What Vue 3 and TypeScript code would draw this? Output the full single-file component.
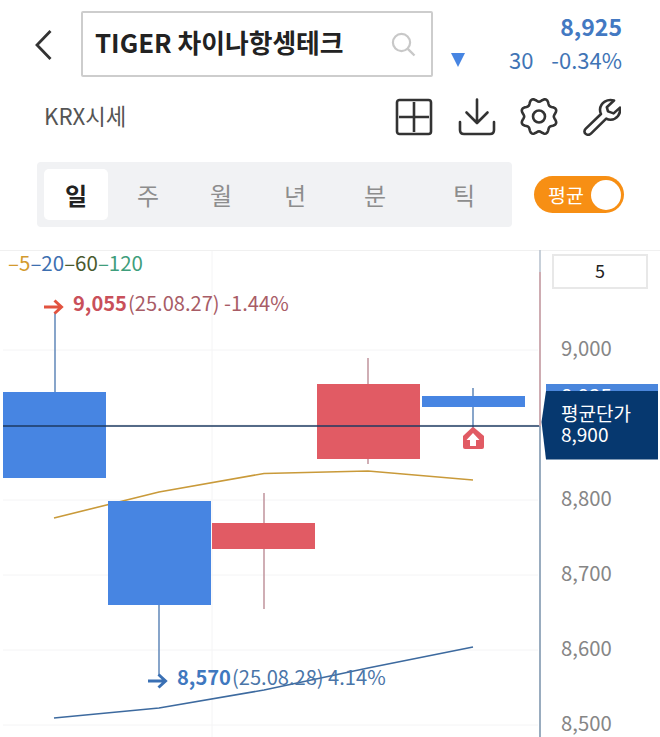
<script setup lang="ts">
type Candle = { x: number; y: number; w: number; h: number; wx: number; wy1: number; wy2: number; up: boolean }

const tabs = ['일', '주', '월', '년', '분', '틱']
const tabCenters = [76, 148, 221, 295, 375, 464]

const legend = [
  { label: '5', color: '#d39a2e' },
  { label: '20', color: '#3d6fb0' },
  { label: '60', color: '#4a5a2e' },
  { label: '120', color: '#3f9e7c' }
]

const gridY = [350, 425, 500, 575, 650, 725]
const axisLabels = [
  { y: 349, text: '9,000' },
  { y: 499, text: '8,800' },
  { y: 574, text: '8,700' },
  { y: 649, text: '8,600' },
  { y: 724, text: '8,500' }
]

const candles: Candle[] = [
  { x: 3, y: 392, w: 103, h: 86, wx: 55, wy1: 312, wy2: 392, up: false },
  { x: 108, y: 501, w: 103, h: 104, wx: 159, wy1: 605, wy2: 675, up: false },
  { x: 212, y: 523, w: 103, h: 26, wx: 264, wy1: 493, wy2: 609, up: true },
  { x: 317, y: 384, w: 103, h: 75, wx: 368, wy1: 358, wy2: 464, up: true },
  { x: 422, y: 396, w: 103, h: 11, wx: 473, wy1: 388, wy2: 428, up: false }
]

const ma5 = '54,518 159,492 264,473.5 368,471 473,480'
const ma20 = '54,718 159,708 264,690 368,668 473,647'

// 톱니바퀴 외곽선
function gearPath(cx: number, cy: number): string {
  const pts: string[] = []
  for (let i = 0; i < 96; i++) {
    const t = (i / 96) * Math.PI * 2
    const r = 16.6 + 1.8 * Math.cos(8 * t + Math.PI)
    pts.push(`${(cx + r * Math.cos(t)).toFixed(2)} ${(cy + r * Math.sin(t)).toFixed(2)}`)
  }
  return 'M' + pts.join('L') + 'Z'
}
const gear = gearPath(19, 18.5)
</script>

<template>
  <div class="page">
    <header class="top">
      <svg class="back" width="18" height="32" viewBox="0 0 18 32">
        <path d="M15.5 2 L2 16 L15.5 30" fill="none" stroke="#333" stroke-width="2.8" />
      </svg>
      <div class="search">
        <span class="name">TIGER 차이나항셍테크</span>
        <svg width="25" height="25" viewBox="0 0 25 25">
          <circle cx="10.5" cy="10.5" r="8.6" fill="none" stroke="#c8c8c8" stroke-width="2.2" />
          <path d="M16.8 16.8 L23.5 23.5" stroke="#c8c8c8" stroke-width="2.4" />
        </svg>
      </div>
      <div class="price">
        <div class="now">8,925</div>
        <div class="change">
          <i class="down"></i>
          <span class="diff">30</span>
          <span>-0.34%</span>
        </div>
      </div>
    </header>

    <div class="tools">
      <span class="market">KRX시세</span>
      <div class="icons">
        <svg width="38" height="38" viewBox="0 0 38 38" fill="none" stroke="#333" stroke-width="2.6">
          <rect x="2" y="2" width="34" height="34" rx="2.5" />
          <path d="M19 4 V34 M4 19 H34" />
        </svg>
        <svg width="38" height="38" viewBox="0 0 38 38" fill="none" stroke="#333" stroke-width="2.6" stroke-linecap="round" stroke-linejoin="round">
          <path d="M19 1.5 V24.5 M8.5 14.5 L19 25 L29.5 14.5" />
          <path d="M2 24 V32 Q2 36 6 36 H32 Q36 36 36 32 V24" />
        </svg>
        <svg width="38" height="38" viewBox="0 0 38 38" fill="none" stroke="#333" stroke-width="2.6" stroke-linejoin="round">
          <path :d="gear" />
          <circle cx="19" cy="18.5" r="6" />
        </svg>
        <svg width="38" height="38" viewBox="0 0 38 38" fill="none" stroke="#333" stroke-width="2.6" stroke-linejoin="round">
          <path d="M31 2.5 C24.5 0.5 17.5 4.5 17 11.5 C17 13.2 17.3 14.6 18 16 L2.8 30.6 C0.8 32.6 1.2 35 2.8 36 C4.6 37.2 6.6 37 8.2 35.4 L23.2 20.6 C24.6 21.4 26 21.8 27.6 21.8 C33.8 21.4 38 16 37 9.6 L30.6 15.4 L25 13.4 L23.8 9.2 Z" />
        </svg>
      </div>
    </div>

    <div class="period">
      <div class="tabs">
        <span
          v-for="(tab, i) in tabs"
          :key="tab"
          class="tab"
          :class="{ active: i === 0 }"
          :style="{ left: tabCenters[i] - 37 + 'px' }"
        >{{ tab }}</span>
      </div>
      <div class="toggle">
        <span>평균</span>
        <i class="knob"></i>
      </div>
    </div>

    <div class="chart">
      <svg width="660" height="487" viewBox="0 250 660 487">
        <line x1="0" x2="660" y1="250" y2="250" stroke="#f0f0f0" stroke-width="2" />
        <line v-for="y in gridY" :key="y" x1="3" x2="538" :y1="y" :y2="y" stroke="#f4f4f5" />
        <line x1="212" x2="212" y1="251" y2="737" stroke="#f4f4f5" />

        <text class="legend" x="8" y="270.5">
          <template v-for="m in legend" :key="m.label">
            <tspan :fill="m.color">–{{ m.label }}</tspan>
          </template>
        </text>

        <polyline :points="ma5" fill="none" stroke="#c99a3a" stroke-width="1.6" />
        <polyline :points="ma20" fill="none" stroke="#3d6a9f" stroke-width="1.6" />

        <g v-for="c in candles" :key="c.x">
          <line
            :x1="c.wx" :x2="c.wx" :y1="c.wy1" :y2="c.wy2"
            :stroke="c.up ? '#c49aa2' : '#6a8fbd'"
            stroke-width="1.6"
          />
          <rect :x="c.x" :y="c.y" :width="c.w" :height="c.h" :fill="c.up ? '#e15b64' : '#4785e2'" />
        </g>

        <line x1="3" x2="540" y1="426" y2="426" stroke="#1c3a60" stroke-width="1.6" />

        <path d="M44 307 H61 M54.5 300.5 L61.5 307 L54.5 313.5" fill="none" stroke="#e2533f" stroke-width="3" />
        <text class="mark" x="73" y="311" fill="#a85c66"><tspan class="bold" fill="#c9505a">9,055</tspan><tspan dx="1">(25.08.27) -1.44%</tspan></text>

        <path d="M148 681 H165 M158.5 674.5 L165.5 681 L158.5 687.5" fill="none" stroke="#3a70b4" stroke-width="3" />
        <text class="mark" x="177" y="685" fill="#4a75a8"><tspan class="bold" fill="#3f78bf">8,570</tspan><tspan dx="1">(25.08.28) 4.14%</tspan></text>

        <path d="M472 427.5 Q473 427 474 427.5 L484 436 V447 Q484 449 482 449 H465 Q463 449 463 447 V436 Z" fill="#e15b64" />
        <path d="M473 433 L479.5 440 H476 V446 H470 V440 H466.5 Z" fill="#fff" />

        <line x1="540" x2="540" y1="250" y2="272" stroke="#b9c4d0" stroke-width="1.6" />
        <line x1="540" x2="540" y1="272" y2="426" stroke="#c9a3aa" stroke-width="1.8" />
        <line x1="540" x2="540" y1="426" y2="737" stroke="#8ea3b8" stroke-width="1.8" />

        <rect x="553" y="255" width="94" height="33" fill="#fff" stroke="#e8e8e8" stroke-width="2" />
        <text class="box" x="600" y="278" text-anchor="middle">5</text>

        <text v-for="a in axisLabels" :key="a.text" class="axis" x="561" :y="a.y + 7">{{ a.text }}</text>

        <path d="M546 384 H658 V394 H546 Z" fill="#4a86dc" />
        <text class="axis peek" x="561" y="404">8,925</text>
        <path d="M546 391 H658 V459.5 H546 L541.5 422 Z" fill="#06386f" />
        <text class="tag" x="561" y="421">평균단가</text>
        <text class="tag" x="561" y="442">8,900</text>
      </svg>
    </div>
  </div>
</template>

<style scoped>
.page {
  width: 660px;
  height: 737px;
  overflow: hidden;
  background: #fff;
  font-family: "Noto Sans CJK KR", "Noto Sans", sans-serif;
  color: #222;
}
.top {
  display: flex;
  align-items: flex-start;
  height: 88px;
  padding: 11px 38px 0 35px;
  box-sizing: border-box;
}
.back {
  margin: 18px 28px 0 0;
}
.search {
  display: flex;
  align-items: center;
  justify-content: space-between;
  box-sizing: border-box;
  width: 352px;
  height: 66px;
  padding: 0 15px 0 12px;
  border: 2px solid #cdcdcd;
  border-radius: 2px;
}
.name {
  margin-bottom: 6px;
  font-size: 25.8px;
  font-weight: 700;
  color: #222;
  white-space: nowrap;
}
.price {
  flex: 1;
  text-align: right;
  color: #3f74b5;
}
.now {
  margin-top: -3px;
  font-size: 23px;
  font-weight: 700;
  line-height: 36px;
  color: #4379c2;
}
.change {
  display: flex;
  align-items: center;
  margin-top: 0;
  font-size: 22px;
  line-height: 30px;
}
.down {
  width: 0;
  height: 0;
  margin: 2px 0 0 18px;
  border-left: 7px solid transparent;
  border-right: 7px solid transparent;
  border-top: 14px solid #4785e2;
}
.diff {
  margin: 0 18px 0 auto;
}
.tools {
  display: flex;
  align-items: center;
  justify-content: space-between;
  height: 58px;
  padding: 0 39px 0 44px;
}
.market {
  margin-bottom: 4px;
  font-size: 22.3px;
  color: #555;
}
.icons {
  display: flex;
  gap: 25px;
}
.icons svg:nth-child(2) {
  margin-right: -1px;
}
.period {
  display: flex;
  align-items: center;
  margin-top: 16px;
  padding-left: 37px;
}
.tabs {
  position: relative;
  width: 475px;
  height: 65px;
  background: #f1f2f4;
  border-radius: 4px;
}
.tab {
  position: absolute;
  top: 7px;
  width: 0;
  display: flex;
  justify-content: center;
  line-height: 51px;
  font-size: 24px;
  color: #8d8d8d;
}
.tab.active {
  left: 7px !important;
  width: 64px;
  background: #fff;
  border-radius: 5px;
  color: #222;
  font-weight: 700;
}
.toggle {
  display: flex;
  align-items: center;
  justify-content: space-between;
  box-sizing: border-box;
  width: 90px;
  height: 37px;
  margin-left: 22px;
  padding: 0 3px 0 14px;
  background: #f78f14;
  border-radius: 19px;
  font-size: 19.5px;
  color: #fff;
}
.knob {
  width: 30px;
  height: 30px;
  background: #fff;
  border-radius: 50%;
}
.chart {
  margin-top: 23px;
}
.chart svg {
  display: block;
}
.legend {
  font-size: 20.5px;
}
.mark {
  font-size: 20.1px;
}
.bold {
  font-weight: 700;
}
.box {
  font-size: 18px;
  fill: #222;
}
.axis {
  font-size: 20.3px;
  fill: #868686;
}
.axis.peek {
  fill: #fff;
}
.tag {
  font-size: 19px;
  fill: #fff;
}
</style>
